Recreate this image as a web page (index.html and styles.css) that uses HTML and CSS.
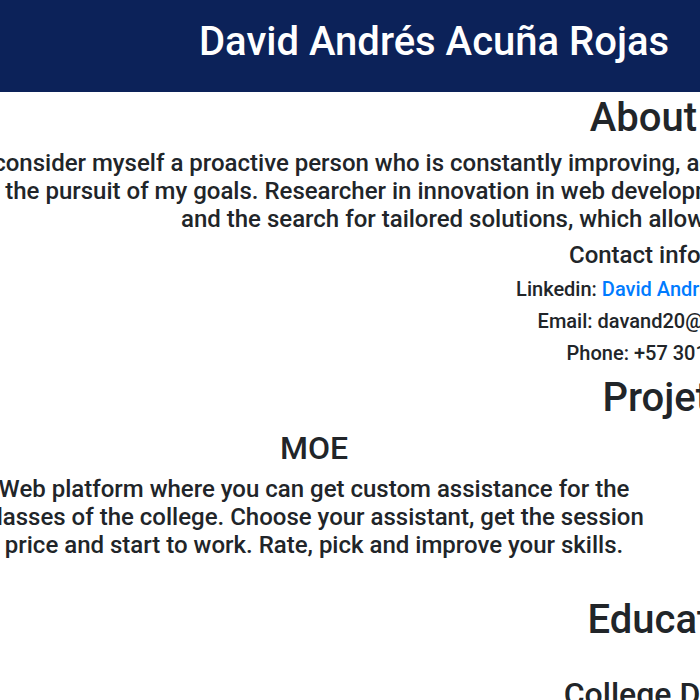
FILE: index.html
```html
<!DOCTYPE html>
<html lang="en">
<head>
<meta charset="utf-8">
<title>David Andrés Acuña Rojas</title>
<link rel="stylesheet" href="styles.css">
</head>
<body>
<header class="banner"><h1>David Andrés Acuña Rojas</h1></header>
<main class="content">
  <section>
    <h1>About Me</h1>
    <p class="lead">
      <span>I consider myself a proactive person who is constantly improving, acquiring new knowledge and skill, always with true discipline in</span>
      <span>the pursuit of my goals. Researcher in innovation in web development, interested in new technologies, software architectures,</span>
      <span>and the search for tailored solutions, which allow me to grow as a professional and a person.</span>
    </p>
    <h4>Contact information</h4>
    <h5>Linkedin: <a href="#">David Andrés Acuña Rojas</a></h5>
    <h5>Email: davand20@hotmail.com</h5>
    <h5>Phone: +57 3012345678</h5>
  </section>
  <section>
    <h1>Projetcs</h1>
    <div class="projects">
      <article>
        <h2>MOE</h2>
        <p class="lead">
          <span>Web platform where you can get custom assistance for the</span>
          <span>classes of the college. Choose your assistant, get the session</span>
          <span>price and start to work. Rate, pick and improve your skills.</span>
        </p>
      </article>
    </div>
  </section>
  <section class="education">
    <h1>Education</h1>
    <h2>College Degree:</h2>
  </section>
</main>
</body>
</html>
```
FILE: styles.css
```css
* { box-sizing: border-box; }

body {
  margin: 0;
  overflow: hidden;
  background: #fff;
  color: #212529;
  font-family: Roboto, "Liberation Sans", sans-serif;
  font-weight: 500;
}

h1, h2, h4, h5, p { margin: 0 0 8px; font-weight: 500; white-space: nowrap; }
h1 { margin-bottom: 6px; font-size: 40px; line-height: 50px; }
h2 { font-size: 32px; line-height: 38px; }
h4, .lead { font-size: 24px; line-height: 28px; }
h5 { font-size: 20px; line-height: 24px; }
a { color: #007bff; text-decoration: none; }

.banner {
  padding: 17px 16px 19px 199px;
  background: #0c2259;
  color: #fff;
}

.content {
  min-width: 1415px;
  margin-left: -31px;
  padding-top: 1px;
  text-align: center;
}
.lead span { display: block; }

.projects {
  display: grid;
  grid-template-columns: 690px 1fr;
  margin-bottom: 28px;
}

.education h1 { margin-bottom: 30px; }
```
